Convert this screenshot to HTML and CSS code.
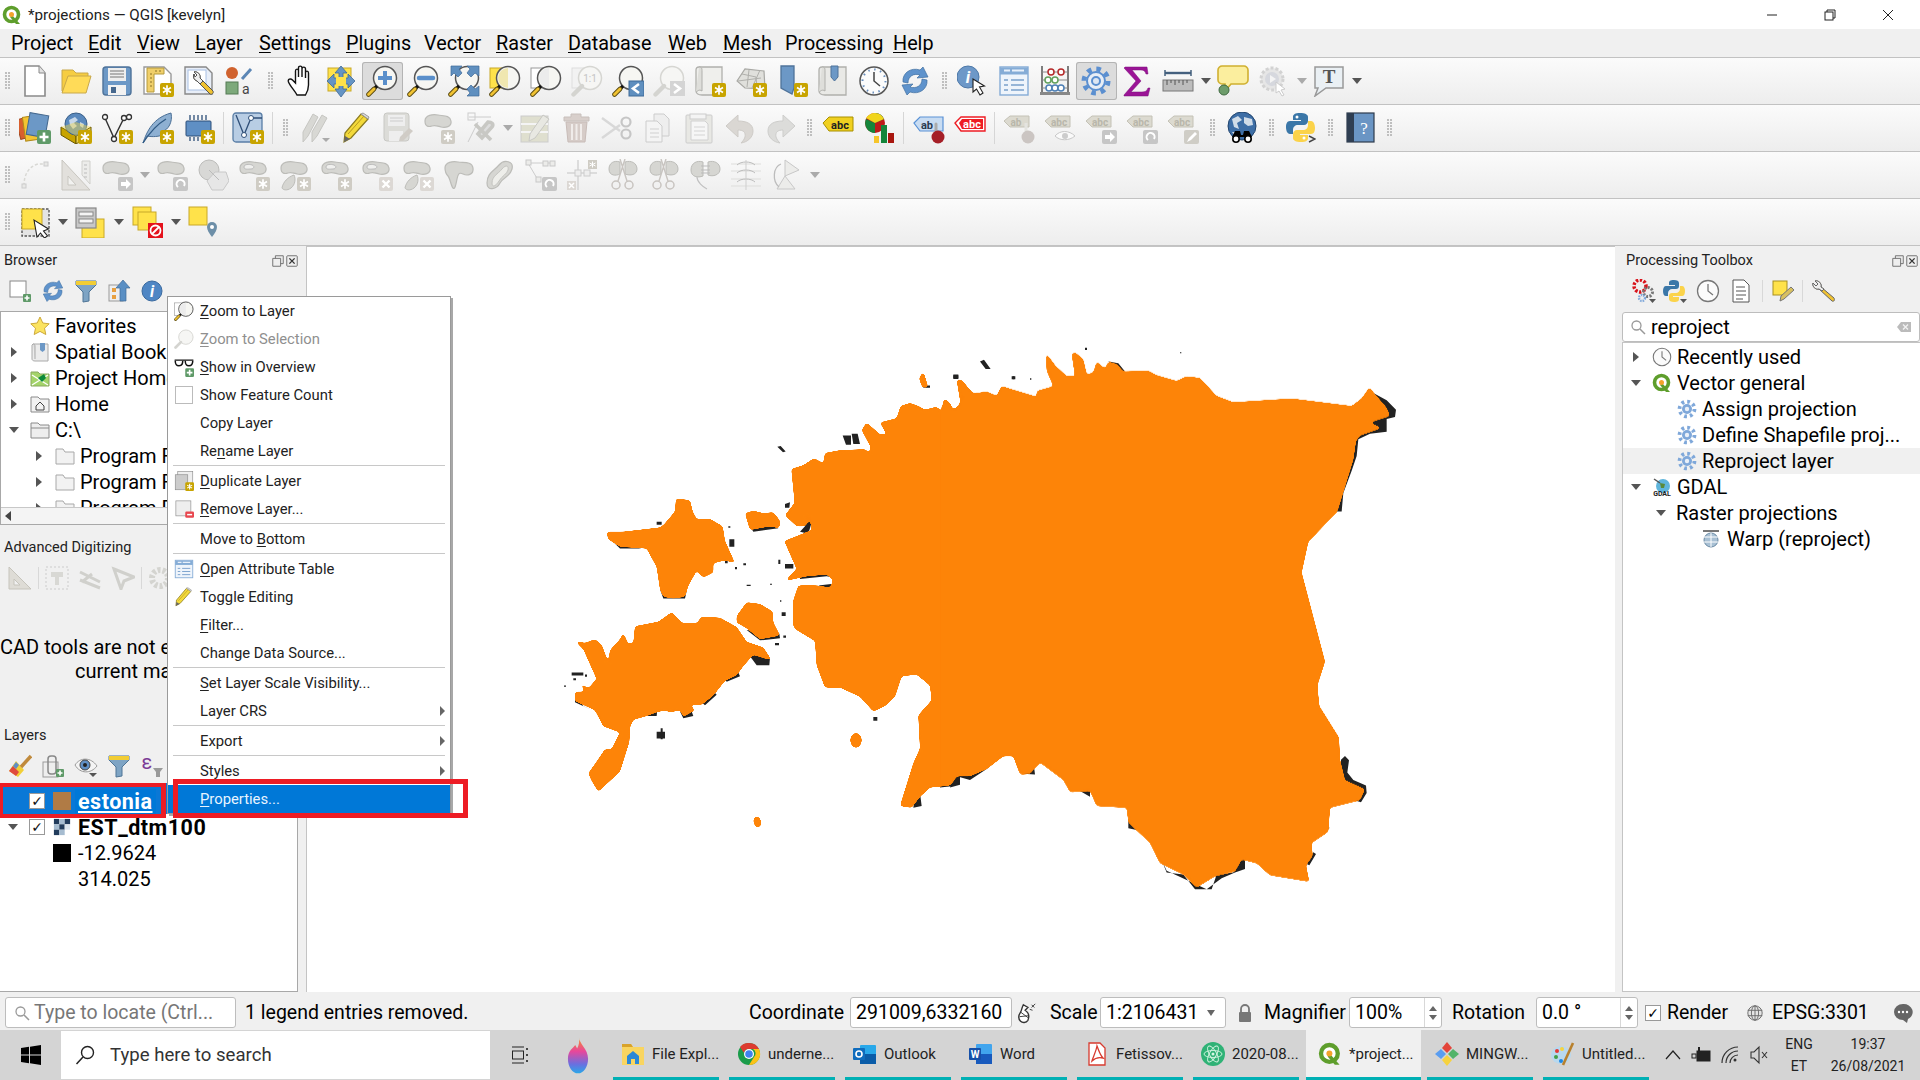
FILE: index.html
```html
<!DOCTYPE html>
<html lang="en">
<head>
<meta charset="utf-8">
<title>*projections — QGIS [kevelyn]</title>
<link rel="stylesheet" href="styles.css">
</head>
<body>
<svg class="sprite" aria-hidden="true"><defs>
<filter id="smooth" color-interpolation-filters="sRGB"><feGaussianBlur stdDeviation="4"/><feColorMatrix values="1 0 0 0 0 0 1 0 0 0 0 0 1 0 0 0 0 0 14 -6"/></filter>
<linearGradient id="flame" x1="0" y1="0" x2="0" y2="1"><stop offset="0" stop-color="#f7941d"/><stop offset=".4" stop-color="#e8479b"/><stop offset=".75" stop-color="#6a6fe0"/><stop offset="1" stop-color="#29a8e8"/></linearGradient>
<g id="bg"><rect x="18" y="18" width="14" height="14" rx="2" fill="#c8a400"/><path d="M25 20.3v9.4M21 22.6l8 4.8M29 22.6l-8 4.8" stroke="#fff" stroke-width="1.7"/></g>
<g id="bo"><rect x="18" y="18" width="14" height="14" rx="2" fill="#cfccc4"/><path d="M25 20.3v9.4M21 22.6l8 4.8M29 22.6l-8 4.8" stroke="#fff" stroke-width="1.7"/></g>
<g id="bx"><rect x="18" y="18" width="14" height="14" rx="2" fill="#dcd8d4"/><path d="M21.5 21.5l7 7M28.5 21.5l-7 7" stroke="#fff" stroke-width="2.4"/></g>
<g id="ba"><rect x="17" y="18" width="15" height="14" rx="2" fill="#c6c6c6"/><path d="M20 23h5v-3l5 5-5 5v-3h-5z" fill="#fff"/></g>
<g id="br"><rect x="17" y="18" width="15" height="14" rx="2" fill="#c6c6c6"/><path d="M22 28a4 4 0 1 1 6-1" fill="none" stroke="#fff" stroke-width="2"/></g>
<g id="bp"><rect x="18" y="18" width="14" height="14" rx="2" fill="#5f9a68"/><path d="M25 20.5v9M20.5 25h9" stroke="#fff" stroke-width="2.6"/></g>
<g id="ln"><circle cx="19" cy="13" r="11.5" fill="#f6f6f2" stroke="#555" stroke-width="1.5"/><path d="M11 21l-3 3" stroke="#111" stroke-width="3.2"/><path d="M8 24l-5.5 5.5" stroke="#5a4a10" stroke-width="4.6" stroke-linecap="round"/><path d="M8 24l-5.5 5.5" stroke="#f0c232" stroke-width="2.8" stroke-linecap="round"/></g>
<g id="lo"><circle cx="19" cy="13" r="11.5" fill="#f6f6f4" stroke="#d6d6d2" stroke-width="1.5"/><path d="M11 21l-8.500 8.500" stroke="#d4d4d0" stroke-width="4.4" stroke-linecap="round"/></g>
<path id="bl" d="M2 9c0-6 8-7 13-6s12 0 13 6-6 7-10 6-6-2-9-1-7 1-7-5z" fill="#d6d6d2" stroke="#bcbcb8" stroke-width="1.2"/>
<path id="ab" d="M1 9l6-5h19v11H7z" fill="#dcdad0" stroke="#c4c2b6"/>
<symbol id="new" viewBox="0 0 32 32"><path d="M6 1h14l6 7v23H6z" fill="#fff" stroke="#8a8a8a" stroke-width="1.6"/><path d="M20 1v7h6" fill="#e2e2e2" stroke="#8a8a8a"/></symbol>
<symbol id="open" viewBox="0 0 32 32"><path d="M2 5h11l3 3h12v4H9L4 26H2z" fill="#f6cd42" stroke="#c8a84a"/><path d="M8 11h23l-5 17H2z" fill="#ffdb58" stroke="#c8a84a"/></symbol>
<symbol id="save" viewBox="0 0 32 32"><rect x="2" y="2" width="28" height="28" rx="3" fill="#6c98c6" stroke="#4f739a" stroke-width="1.4"/><rect x="7" y="3" width="18" height="13" fill="#eee"/><path d="M9 6h14M9 9h14M9 12h14" stroke="#777" stroke-width="1.2"/><rect x="7" y="20" width="18" height="10" fill="#f2f2f2"/><rect x="10" y="22" width="5" height="6" fill="#46688e"/></symbol>
<symbol id="lay" viewBox="0 0 32 32"><path d="M2 2h20l7 7v20H2z" fill="#fff" stroke="#999" stroke-width="1.4"/><path d="M5 3h17v6H12v18H5z" fill="#f0cf6a" stroke="#b59a3c"/><path d="M8 9h2M8 13h2M8 17h2M8 21h2M14 5v2M18 5v2" stroke="#8a7228"/><use href="#bg"/></symbol>
<symbol id="man" viewBox="0 0 32 32"><path d="M2 2h21l6 6v21H2z" fill="#e8eef8" stroke="#888" stroke-width="1.4"/><rect x="5" y="5" width="18" height="20" fill="#fff" stroke="#a8c0e4"/><path d="M11 9a5 5 0 0 0 3 7l13 13c2 1 4-1 3-3L17 13a5 5 0 0 0-6-6l3 3-2 2z" fill="#f0c232" stroke="#555"/><path d="M11 9a5 5 0 0 0 3 7l3 3 3-3-3-3a5 5 0 0 0-6-6l3 3-2 2z" fill="#eee" stroke="#555"/></symbol>
<symbol id="sty" viewBox="0 0 32 32"><circle cx="8" cy="8" r="6" fill="#d0622e"/><path d="M18 14l9-10" stroke="#5b86b5" stroke-width="3"/><rect x="2" y="17" width="12" height="12" fill="#7da97b" stroke="#557a55"/><text x="18" y="29" class="ti" font-size="14" fill="#444">a</text></symbol>
<symbol id="hand" viewBox="0 0 32 32"><g transform="translate(3 0)"><path d="M10 30C8 26 3 21 1.500 17c-1-3 2-4 4-2l3 3V6c0-2.500 3-2.500 3 0v6V3c0-2.500 3.500-2.500 3.500 0v9V4c0-2.500 3.500-2.500 3.500 0v9V8c0-2.500 3-2.500 3 0v12c0 4-.5 6-3 10z" fill="#fff" stroke="#111" stroke-width="1.4"/></g></symbol>
<symbol id="pan" viewBox="0 0 32 32"><rect x="3" y="3" width="23" height="23" fill="#ffe24a" stroke="#c8a828"/><path d="M16 1l6 7h-4v5h5v-4l7 7-7 7v-4h-5v5h4l-6 8-6-8h4v-5H9v4l-7-7 7-7v4h5V8h-4z" fill="#6594c4" stroke="#3f6a98" stroke-width=".8"/><rect x="11" y="12" width="10" height="9" fill="#ffe24a"/></symbol>
<symbol id="zin" viewBox="0 0 32 32"><use href="#ln"/><path d="M19 6v14M12 13h14" stroke="#5a8fca" stroke-width="4"/></symbol>
<symbol id="zout" viewBox="0 0 32 32"><use href="#ln"/><path d="M12 13h14" stroke="#5a8fca" stroke-width="4.500" stroke-linecap="round"/></symbol>
<symbol id="zfull" viewBox="0 0 32 32"><use href="#ln"/><path d="M3 1h11l-3 3 3 4-4 4-4-4-3 3zM31 1H19l3 3-3 4 4 4 4-4 4 3zM31 31H19l3-3-3-4 4-4 4 4 4-3z" fill="#5f8fbf" stroke="#3f6a98" stroke-width=".7"/></symbol>
<symbol id="zsel" viewBox="0 0 32 32"><rect x="1" y="3" width="20" height="20" fill="#ffe24a" stroke="#c8a828"/><use href="#ln"/><path d="M19 3a10 10 0 0 0 0 20z" fill="#f0e7b0"/></symbol>
<symbol id="zlay" viewBox="0 0 32 32"><rect x="1" y="3" width="20" height="20" fill="#fff" stroke="#999"/><use href="#ln"/><path d="M19 3a10 10 0 0 0 0 20z" fill="#ececec"/></symbol>
<symbol id="z11" viewBox="0 0 32 32"><rect x="1" y="3" width="20" height="20" fill="#f2f2f2" stroke="#ddd"/><use href="#lo"/><text x="19" y="17" text-anchor="middle" class="tb" font-size="10" fill="#c4c4c4">1:1</text></symbol>
<symbol id="zlast" viewBox="0 0 32 32"><use href="#ln"/><rect x="17" y="16" width="15" height="15" fill="#5f8fbf" stroke="#3f6a98"/><path d="M27 19l-6 4.500 6 4.500" fill="none" stroke="#fff" stroke-width="2.600"/></symbol>
<symbol id="znext" viewBox="0 0 32 32"><use href="#lo"/><rect x="17" y="16" width="15" height="15" fill="#d4d4d4"/><path d="M21 19l6 4.500-6 4.500" fill="none" stroke="#fff" stroke-width="2.600"/></symbol>
<symbol id="map" viewBox="0 0 32 32"><path d="M5 2h23v22h-4v6H8c-4 0-6-2-6-4V5c0-2 1-3 3-3z" fill="#efefec" stroke="#b0b0ac" stroke-width="1.300"/><path d="M5 2c3 0 3 2 3 4v20c-3-2-4 0-6 1" fill="#dededa" stroke="#b0b0ac"/><use href="#bg"/></symbol>
<symbol id="m3d" viewBox="0 0 32 32"><path d="M2 16L10 4l19 2 1 18-20-1z" fill="#e0e0dc" stroke="#a8a8a4" stroke-width="1.200"/><path d="M7 9l14 3 1 11M14 5l-2 17M3 16l23-3M25 5l-8 18" stroke="#b0b0ac" fill="none"/><use href="#bg"/></symbol>
<symbol id="bmn" viewBox="0 0 32 32"><path d="M5 1h13v22l-2 6-11-6z" fill="#6c98c6" stroke="#4f739a" stroke-width="1.300"/><use href="#bg"/></symbol>
<symbol id="bms" viewBox="0 0 32 32"><path d="M5 2h24v28H8c-4 0-6-2-6-4V5c0-2 1-3 3-3z" fill="#e9e9e6" stroke="#b0b0ac" stroke-width="1.300"/><path d="M5 2c3 0 3 2 3 4v20c-3-2-4 0-6 1" fill="#dededa" stroke="#b0b0ac"/><path d="M14 1h7v11l-3.500 4-3.500-4z" fill="#6c98c6" stroke="#4f739a"/></symbol>
<symbol id="clk" viewBox="0 0 32 32"><circle cx="16" cy="16" r="14" fill="#fbfbfb" stroke="#555" stroke-width="1.500"/><circle cx="16" cy="16" r="11.500" fill="none" stroke="#6a8fbd" stroke-width="2" stroke-dasharray="1.500 4.500"/><path d="M16 7v9l6 5" fill="none" stroke="#444" stroke-width="1.500"/></symbol>
<symbol id="ref" viewBox="0 0 32 32"><path d="M4 17C3 8 12 2 21 5l3-3 5 10-11 1 3-3c-6-2-12 1-12 8z" fill="#5f93cc" stroke="#3f6f9f" stroke-width=".7"/><path d="M28 15c1 9-8 15-17 12l-3 3-5-10 11-1-3 3c6 2 12-1 12-8z" fill="#5f93cc" stroke="#3f6f9f" stroke-width=".7"/></symbol>
<symbol id="idn" viewBox="0 0 32 32"><circle cx="11" cy="12" r="11" fill="#6d98c8" stroke="#4d78a8"/><text x="11" y="18" text-anchor="middle" class="ts" font-size="17" font-weight="700" font-style="italic" fill="#fff">i</text><path d="M16 14l0 13 3.500-3 3.500 6 3-2-3.500-6 5-1z" fill="#fff" stroke="#222" stroke-width="1.100"/></symbol>
<symbol id="tbl" viewBox="0 0 32 32"><rect x="2" y="2" width="28" height="28" fill="#eef4fb" stroke="#85acd6" stroke-width="1.400"/><path d="M2 6h28" stroke="#85acd6" stroke-width="7"/><path d="M6 5.500h6M14 5.500h12" stroke="#e8f0fa" stroke-width="2"/><path d="M6 15h4M13 15h13M6 20h4M13 20h13M6 25h4M13 25h13" stroke="#7aa0cc" stroke-width="1.500"/></symbol>
<symbol id="aba" viewBox="0 0 32 32"><path d="M3 1v26M29 1v26" stroke="#555" stroke-width="1.500"/><path d="M3 7h26M3 15h26M3 23h26" stroke="#888"/><rect x="1" y="27" width="30" height="3" fill="#888"/><g fill="#fff" stroke-width="1.500"><circle cx="12" cy="7" r="3" stroke="#b52a2a"/><circle cx="22" cy="7" r="3" stroke="#b52a2a"/><circle cx="9" cy="15" r="3" stroke="#62a05c"/><circle cx="16" cy="15" r="3" stroke="#62a05c"/><circle cx="10" cy="23" r="3" stroke="#4d7fb5"/><circle cx="16" cy="23" r="3" stroke="#4d7fb5"/><circle cx="22" cy="23" r="3" stroke="#4d7fb5"/></g></symbol>
<symbol id="gr" viewBox="0 0 32 32"><circle cx="16" cy="16" r="12" fill="none" stroke="#5b8fd0" stroke-width="5" stroke-dasharray="4.500 4.920"/><circle cx="16" cy="16" r="9" fill="#e8eef6" stroke="#5b8fd0" stroke-width="2"/><circle cx="16" cy="16" r="4" fill="#dde6f2" stroke="#5b8fd0" stroke-width="2"/></symbol>
<symbol id="gf" viewBox="0 0 32 32"><circle cx="16" cy="16" r="12" fill="none" stroke="#7fa8da" stroke-width="6" stroke-dasharray="4.500 4.920"/><circle cx="16" cy="16" r="8" fill="#7fa8da"/><circle cx="16" cy="16" r="3.500" fill="#eaf0f8"/></symbol>
<symbol id="sig" viewBox="0 0 32 32"><path d="M4 2h22l1 7-2 0c-1-3-2-4-5-4H11l9 11-10 11h11c3 0 5-1 6-4h2l-2 8H3v-1l12-14L3 3z" fill="#9b1496" stroke="#7a107a" stroke-width=".5"/></symbol>
<symbol id="rul" viewBox="0 0 32 32"><path d="M3 5v6M29 5v6" stroke="#44607e" stroke-width="1.500"/><path d="M3 8h26" stroke="#44607e" stroke-width="2.400"/><rect x="1" y="15" width="30" height="11" fill="#bdbdbd" stroke="#777"/><path d="M5 15v5M9 15v3M13 15v5M17 15v3M21 15v5M25 15v3" stroke="#555"/></symbol>
<symbol id="tip" viewBox="0 0 32 32"><path d="M5 1h22c2 0 4 2 4 4v10c0 2-2 4-4 4H14l-6 7v-7H5c-2 0-4-2-4-4V5c0-2 2-4 4-4z" fill="#fbee9e" stroke="#d0b030" stroke-width="1.600"/><circle cx="7" cy="25" r="5" fill="#6d9c6b" stroke="#3f6a40"/></symbol>
<symbol id="act" viewBox="0 0 32 32"><circle cx="14" cy="14" r="11" fill="#e6e6e6" stroke="#d2d2d2" stroke-width="3" stroke-dasharray="3 2"/><circle cx="14" cy="14" r="7" fill="#d6d8de"/><path d="M12 10l6 4-6 4z" fill="#f4f4f4"/><path d="M18 17v11l3-2 3 5 2-1-3-5 4-1z" fill="#fff" stroke="#ccc"/></symbol>
<symbol id="txt" viewBox="0 0 32 32"><path d="M2 2h28v21H13L2 31l3-8H2z" fill="#eaf0f4" stroke="#999" stroke-width="1.500"/><text x="16" y="18" text-anchor="middle" class="tt" font-size="19" font-weight="700" fill="#555">T</text></symbol>
<symbol id="dm" viewBox="0 0 32 32"><rect x="-1" y="6" width="14" height="20" transform="rotate(-15 6 16)" fill="#d85f2e" stroke="#a0481f"/><rect x="5" y="4" width="18" height="24" transform="rotate(-8 14 16)" fill="#f3c431" stroke="#b08a1c"/><rect x="9" y="2" width="19" height="22" transform="rotate(10 18 13)" fill="#6c98c6" stroke="#44688e"/><use href="#bp"/></symbol>
<symbol id="gpk" viewBox="0 0 32 32"><path d="M1 15l15 9v8L1 23z" fill="#c8a400" stroke="#6a5800"/><path d="M31 15l-15 9v8l15-9z" fill="#e8cf50" stroke="#6a5800"/><circle cx="16" cy="12" r="11" fill="#5a89bd" stroke="#3a5f88"/><path d="M9 8l6-3 3 3-4 3 3 3-4 3-3-4zM20 10l4 2-1 4-3-2z" fill="#c7d8ea"/><path d="M1 15l15-5 15 5-15 9z" fill="#f5d94c" opacity=".45"/><use href="#bg"/></symbol>
<symbol id="shp" viewBox="0 0 32 32"><path d="M4 6l9 20 10-20h5" fill="none" stroke="#333" stroke-width="1.400"/><g fill="#fff" stroke="#333" stroke-width="1.300"><circle cx="4" cy="5" r="2.500"/><circle cx="13" cy="27" r="2.500"/><circle cx="23" cy="6" r="2.500"/><circle cx="28" cy="5" r="2.500"/></g><use href="#bg"/></symbol>
<symbol id="fea" viewBox="0 0 32 32"><path d="M1 31C5 19 11 6 29 1c2 9-3 17-8 18l2 3c-6 3-13 3-18 2z" fill="#8eb0d2" stroke="#4a6f96"/><path d="M1 31C8 20 14 13 24 7" fill="none" stroke="#2f5a85" stroke-width="1.300"/><use href="#bg"/></symbol>
<symbol id="mem" viewBox="0 0 32 32"><rect x="3" y="9" width="25" height="15" rx="1" fill="#5f8fc4" stroke="#2d4f78"/><path d="M7 3v5M11 3v5M15 3v5M19 3v5M23 3v5M7 25v4M11 25v4M15 25v4" stroke="#2d4f78" stroke-width="1.300"/><use href="#bg"/></symbol>
<symbol id="vir" viewBox="0 0 32 32"><rect x="1" y="1" width="29" height="29" rx="3" fill="#b8cde4" stroke="#5a7ea6" stroke-width="1.300"/><path d="M4 3l8 20 7-17h11" fill="none" stroke="#2f4f78" stroke-width="1.300"/><g fill="#fff" stroke="#2f4f78"><circle cx="12" cy="23" r="2.500"/><circle cx="19" cy="6" r="2.500"/></g><use href="#bg"/></symbol>
<symbol id="pens" viewBox="0 0 32 32"><path d="M3 30l0-10L13 2l5 3L8 24zM12 30l0-10L22 3l5 3-10 18z" fill="#d8d8d4" stroke="#c6c6c2"/><path d="M22 26h8l-4 4z" fill="#aaa"/></symbol>
<symbol id="pen" viewBox="0 0 32 32"><path d="M3 30l1-9L20 2l7 5L10 26z" fill="#f3d93a" stroke="#8a7a20" stroke-width="1.200"/><path d="M7 22L23 4" stroke="#b89a20"/><path d="M3 30l1-6 5 3z" fill="#666"/><path d="M20 2l7 5 1-2-6-4z" fill="#ddd" stroke="#999"/></symbol>
<symbol id="sed" viewBox="0 0 32 32"><rect x="2" y="1" width="25" height="28" rx="3" fill="#dcdcd8" stroke="#c8c8c4"/><rect x="6" y="3" width="17" height="11" fill="#eee"/><path d="M8 6h13M8 9h13" stroke="#ccc"/><rect x="7" y="19" width="14" height="10" fill="#eee"/><path d="M17 29l1-4 9-9 4 3-10 10z" fill="#d0ccc6"/></symbol>
<symbol id="padd" viewBox="0 0 32 32"><use href="#bl"/><use href="#bo"/></symbol>
<symbol id="vtx" viewBox="0 0 32 32"><rect x="4" y="1" width="7" height="7" fill="none" stroke="#ccc"/><path d="M5 5h22M4 30L14 10" stroke="#ccc"/><path d="M11 12l16 16M24 10c4 0 6 2 4 5L18 26l-4-4z" stroke="#c8c8c4" stroke-width="3.600" fill="#ddd"/></symbol>
<symbol id="mod" viewBox="0 0 32 32"><rect x="2" y="4" width="27" height="26" fill="#dfdfcf" stroke="#ccc"/><path d="M2 12h27M2 20h27" stroke="#f4f4f4" stroke-width="2"/><path d="M10 29l1-7L24 3l6 4-14 19z" fill="#e8e8e2" stroke="#c8c8c4"/></symbol>
<symbol id="del" viewBox="0 0 32 32"><path d="M4 5h7V2h10v3h8v4H4z" fill="#d8cfcb" stroke="#c8c0bc"/><path d="M6 10h21l-2 20H8z" fill="#d6ccc8" stroke="#c8bcb8"/><path d="M12 12v16M16.500 12v16M21 12v16" stroke="#f0ecea" stroke-width="2"/></symbol>
<symbol id="cut" viewBox="0 0 32 32"><path d="M1 6l18 13M1 26l18-13" stroke="#d8d8d8" stroke-width="2.400"/><g fill="none" stroke="#c6c6c6" stroke-width="2.200"><circle cx="25" cy="10" r="4.500"/><circle cx="25" cy="22" r="4.500"/></g></symbol>
<symbol id="cpy" viewBox="0 0 32 32"><path d="M12 2h10l5 5v17H12z" fill="#eee" stroke="#ccc"/><path d="M4 9h11l5 5v16H4z" fill="#f4f4f4" stroke="#ccc"/><path d="M8 17h9M8 21h9M8 25h9" stroke="#d0d0d0"/></symbol>
<symbol id="pst" viewBox="0 0 32 32"><rect x="3" y="3" width="26" height="28" rx="1" fill="#e8e8e4" stroke="#ccc"/><rect x="7" y="2" width="16" height="5" fill="#f4f4f4" stroke="#ccc"/><path d="M8 9h14l3 3v16H8z" fill="#f6f6f6" stroke="#d0d0d0"/><path d="M11 15h11M11 19h11M11 23h11" stroke="#d4d4d4"/></symbol>
<symbol id="und" viewBox="0 0 32 32"><path d="M14 3L2 14l12 11v-7c5 0 8 2 7 7-1 3-3 5-4 6 7-1 12-6 12-12 0-7-6-10-15-10z" fill="#dad7d3" stroke="#cecbc7"/></symbol>
<symbol id="red" viewBox="0 0 32 32"><path d="M18 3l12 11-12 11v-7c-5 0-8 2-7 7 1 3 3 5 4 6C8 30 3 25 3 19c0-7 6-10 15-10z" fill="#dcdcda" stroke="#cdcdcb"/></symbol>
<symbol id="abcy" viewBox="0 0 32 32"><g transform="translate(0 3)"><path d="M1 8l6-6h24v14H7z" fill="#f0d020" stroke="#a89000"/><text x="18" y="13.500" text-anchor="middle" class="tb" font-size="11" font-weight="700" fill="#222">abc</text></g></symbol>
<symbol id="dia" viewBox="0 0 32 32"><circle cx="12" cy="11" r="10" fill="#bd1a1a"/><path d="M12 11V1a10 10 0 0 1 9 6zM12 11L3 7A10 10 0 0 0 12 21z" fill="#14853b"/><path d="M12 11V1C8 1 5 3 3 6z M12 11l9-4C19 3 16 1 12 1z" fill="#f1d51c"/><rect x="11" y="24" width="5" height="7" fill="#f6c52a"/><rect x="18" y="13" width="6" height="18" fill="#14853b"/><rect x="25" y="21" width="6" height="10" fill="#a8160e"/></symbol>
<symbol id="pin" viewBox="0 0 32 32"><g transform="translate(0 3)"><path d="M1 8l6-6h23v14H7z" fill="#c8dcf2" stroke="#5a92d6" stroke-width="1.200"/><text x="14" y="13.500" text-anchor="middle" class="tb" font-size="11" font-weight="700" fill="#2a3a50">ab</text></g><path d="M23 12v12" stroke="#aaa" stroke-width="3" stroke-linecap="round"/><circle cx="25" cy="25" r="6.500" fill="#a51f27"/></symbol>
<symbol id="abcr" viewBox="0 0 32 32"><g transform="translate(0 3)"><path d="M1 8l6-6h24v14H7z" fill="#fff" stroke="#ee1c24" stroke-width="1.400"/><path d="M5 8l3-4h21v10H8z" fill="#ee1c24"/><text x="18" y="13" text-anchor="middle" class="tb" font-size="11" font-weight="700" fill="#fff">abc</text></g></symbol>
<symbol id="a1" viewBox="0 0 32 32"><use href="#ab"/><text x="13" y="14" text-anchor="middle" class="tb" font-size="10" font-weight="700" fill="#b8b6aa">ab</text><path d="M23 11v12" stroke="#e4e4e0" stroke-width="3"/><circle cx="25" cy="25" r="6.500" fill="#cbc5c2"/></symbol>
<symbol id="a2" viewBox="0 0 32 32"><use href="#ab"/><text x="15" y="14" text-anchor="middle" class="tb" font-size="10" font-weight="700" fill="#b8b6aa">abc</text><path d="M11 24c5-6 14-6 20 0-6 5-15 5-20 0z" fill="#fafafa" stroke="#c8c8c8"/><circle cx="21" cy="24" r="3" fill="#ccc"/></symbol>
<symbol id="a3" viewBox="0 0 32 32"><use href="#ab"/><text x="15" y="14" text-anchor="middle" class="tb" font-size="10" font-weight="700" fill="#b8b6aa">abc</text><use href="#ba"/></symbol>
<symbol id="a4" viewBox="0 0 32 32"><use href="#ab"/><text x="15" y="14" text-anchor="middle" class="tb" font-size="10" font-weight="700" fill="#b8b6aa">abc</text><use href="#br"/></symbol>
<symbol id="a5" viewBox="0 0 32 32"><use href="#ab"/><text x="15" y="14" text-anchor="middle" class="tb" font-size="10" font-weight="700" fill="#b8b6aa">abc</text><rect x="17" y="18" width="15" height="14" rx="2" fill="#cfcdc6"/><path d="M20 30l2-4 6-6 2 2-6 6z" fill="#fff"/></symbol>
<symbol id="glb" viewBox="0 0 32 32"><circle cx="16" cy="14" r="14" fill="#3d6ea6" stroke="#22456e"/><path d="M6 7l6-3 4 4-5 3 2 6-5-2zM18 5l8 2 1 6-5 1-4-3zM6 20l6 0 0 5-3-1z" fill="#d0dce8"/><g fill="#000"><circle cx="10" cy="27" r="4"/><circle cx="22" cy="27" r="4"/><path d="M9 19h5l1 4h2l1-4h5l3 6H6z"/></g><circle cx="10" cy="27" r="2.400" fill="#fff"/><circle cx="22" cy="27" r="2.400" fill="#fff"/></symbol>
<symbol id="py" viewBox="0 0 32 32"><g transform="translate(2 0)"><path d="M14 1c-5 0-7 1.500-7 4v3h8v1H4c-3 0-4 3-4 6s1 7 4 7h3v-4c0-3 2-5 5-5h6c2 0 4-2 4-4V5c0-2.500-3-4-8-4z" fill="#3b77a8"/><circle cx="11" cy="5" r="1.500" fill="#fff"/><path d="M15 30c5 0 7-1.500 7-4v-3h-8v-1h11c3 0 4-3 4-6s-1-7-4-7h-3v4c0 3-2 5-5 5H11c-2 0-4 2-4 4v4c0 2.500 3 4 8 4z" fill="#fbd34a"/><circle cx="18" cy="26" r="1.500" fill="#fff"/><path d="M23 24l6 3-6 3" fill="none" stroke="#444" stroke-width="1.400"/></g></symbol>
<symbol id="hlp" viewBox="0 0 32 32"><rect x="2" y="1" width="27" height="29" fill="#6a95c4" stroke="#2e3b4c" stroke-width="1.200"/><rect x="2" y="1" width="7" height="29" fill="#2f3e52"/><text x="19" y="22" text-anchor="middle" class="tt" font-size="17" fill="#fff">?</text></symbol>
<symbol id="dig" viewBox="0 0 32 32"><path d="M5 27C5 16 9 8 19 5h6" fill="none" stroke="#d8d8d4" stroke-width="1.500" stroke-dasharray="3 2"/><g fill="#e8e8e6" stroke="#ccc"><rect x="3" y="25" width="4" height="4"/><rect x="25" y="3" width="4" height="4"/></g></symbol>
<symbol id="tri" viewBox="0 0 32 32"><path d="M2 1l28 30H2z" fill="#e2e0dc" stroke="#c8c6c0"/><path d="M8 17l8 9H8z" fill="#f2f2f0" stroke="#c8c6c0"/><path d="M22 2h8v23l-8-9z" fill="#ececea" stroke="#d0d0cc"/><path d="M24 6h3M24 10h3M24 14h3M24 18h3" stroke="#bbb"/></symbol>
<symbol id="bma" viewBox="0 0 32 32"><use href="#bl"/><use href="#ba"/></symbol>
<symbol id="bmr" viewBox="0 0 32 32"><use href="#bl"/><use href="#br"/></symbol>
<symbol id="off" viewBox="0 0 32 32"><circle cx="12" cy="11" r="10" fill="#d8d8d6" stroke="#bcbcba"/><path d="M18 13l11 0 3 9-6 9H15l-5-9z" fill="#e6e6e6" stroke="#c8c8c8"/><path d="M12 11l10 10" stroke="#bbb"/></symbol>
<symbol id="hg" viewBox="0 0 32 32"><use href="#bl"/><path d="M6 8c0-3 5-3 8-2s2 4-1 4-7 1-7-2z" fill="#f0f0ee" stroke="#bbb"/><use href="#bo"/></symbol>
<symbol id="pg" viewBox="0 0 32 32"><use href="#bl"/><path d="M3 29c1-6 6-11 12-13 2 4 1 10-3 13s-8 2-9 0z" fill="#d6d6d2" stroke="#bcbcb8"/><use href="#bo"/></symbol>
<symbol id="hx" viewBox="0 0 32 32"><use href="#bl"/><path d="M6 8c0-3 5-3 8-2s2 4-1 4-7 1-7-2z" fill="#f0f0ee" stroke="#bbb"/><use href="#bx"/></symbol>
<symbol id="px" viewBox="0 0 32 32"><use href="#bl"/><path d="M3 29c1-6 6-11 12-13 2 4 1 10-3 13s-8 2-9 0z" fill="#d6d6d2" stroke="#bcbcb8"/><use href="#bx"/></symbol>
<symbol id="fl" viewBox="0 0 32 32"><path d="M2 9c0-6 8-7 13-6s14-1 15 6-6 8-10 6-5 0-6 5-2 11-4 9-3-10-5-12-3-4-3-8z" fill="#d6d6d2" stroke="#bcbcb8" stroke-width="1.200"/></symbol>
<symbol id="rg" viewBox="0 0 32 32"><path d="M3 24c0-10 7-12 12-18s15-4 13 4-9 8-12 14-13 9-13 0z" fill="#d6d6d2" stroke="#bcbcb8" stroke-width="1.200"/><path d="M8 24c0-7 6-9 10-14s7-3 6 1-6 6-9 11-7 7-7 2z" fill="#eeeeea" stroke="#c4c4c0"/></symbol>
<symbol id="vr" viewBox="0 0 32 32"><path d="M3 4l10 17M3 4h22" stroke="#ccc" fill="none"/><g fill="#ececea" stroke="#c8c8c8"><rect x="1" y="1" width="5" height="5"/><rect x="11" y="18" width="5" height="5"/><rect x="18" y="2" width="5" height="5"/><rect x="25" y="2" width="5" height="5"/></g><use href="#br"/></symbol>
<symbol id="sp" viewBox="0 0 32 32"><path d="M12 1v30M1 14h30" stroke="#d4d4d4" stroke-width="1.500"/><rect x="9" y="11" width="6" height="6" fill="#eee" stroke="#ccc"/><rect x="18" y="11" width="6" height="6" fill="#eee" stroke="#ccc"/><rect x="22" y="1" width="9" height="9" fill="#cfccc4"/><path d="M26.500 2.500v6M23.500 4l6 3M29.500 4l-6 3" stroke="#fff"/><rect x="1" y="22" width="9" height="9" fill="#dcd8d4"/><path d="M3 24l5 5M8 24l-5 5" stroke="#fff" stroke-width="1.500"/></symbol>
<symbol id="sc" viewBox="0 0 32 32"><path d="M2 10C2 4 7 1 13 3v12c-4 2-11 2-11-5zM18 3c6-2 12 1 12 7s-7 7-12 5z" fill="#d6d6d2" stroke="#bcbcb8"/><path d="M18 0L11 22M13 0l7 22" stroke="#c8c4c0" stroke-width="1.400"/><g fill="none" stroke="#c8c4c0" stroke-width="1.500"><circle cx="9" cy="26" r="4"/><circle cx="22" cy="26" r="4"/></g></symbol>
<symbol id="mg" viewBox="0 0 32 32"><path d="M2 11C2 4 8 1 14 3v14c-5 2-12 1-12-6zM19 3c6-2 12 1 12 7s-7 8-12 6z" fill="#d6d6d2" stroke="#bcbcb8"/><path d="M12 7h9M12 11h9M12 14h9" stroke="#bbb"/><path d="M8 18c0 5 6 10 10 12" stroke="#c0c0c0" fill="none" stroke-width="1.200"/></symbol>
<symbol id="oc" viewBox="0 0 32 32"><path d="M1 5h30M1 12h30M1 20h30M1 27h30" stroke="#dededc" stroke-width="1.200"/><path d="M7 6c4-4 14-4 18 0M7 14c4-4 14-4 18 0M7 23c4-4 14-4 18 0" fill="none" stroke="#bcbcbc"/><path d="M16 1v30" stroke="#cfcfcf"/></symbol>
<symbol id="fg" viewBox="0 0 32 32"><path d="M14 1l14 10-14 6zM14 17l10 13H6z" fill="#ececea" stroke="#c8c8c8"/><path d="M10 5C2 8 1 22 8 28" fill="none" stroke="#bcbcbc" stroke-width="1.300"/></symbol>
<symbol id="sl" viewBox="0 0 32 32"><rect x="3" y="3" width="27" height="27" fill="#e4e4e4" stroke="#555" stroke-width="1.400" stroke-dasharray="2.500 1.500"/><rect x="3" y="3" width="20" height="20" fill="#ffe24a" stroke="#c8a828"/><path d="M15 14l3 17 3.500-4 4 5 3-2-4-5 5-2z" fill="#fff" stroke="#222" stroke-width="1.100"/></symbol>
<symbol id="sa" viewBox="0 0 32 32"><rect x="7" y="13" width="22" height="19" fill="#ffe24a" stroke="#c8a828"/><rect x="1" y="2" width="20" height="20" fill="#c8c8c8" stroke="#888" stroke-width="1.200"/><rect x="4" y="6" width="14" height="4" fill="#f4f4f4" stroke="#888"/><rect x="4" y="13" width="14" height="4" fill="#f4f4f4" stroke="#888"/></symbol>
<symbol id="sd" viewBox="0 0 32 32"><rect x="1" y="1" width="18" height="18" fill="#ffe24a" stroke="#c8a828"/><rect x="6" y="6" width="18" height="18" fill="#ffe24a" stroke="#c8a828"/><rect x="16" y="17" width="15" height="15" fill="#e4121c"/><circle cx="23.500" cy="24.500" r="5" fill="none" stroke="#fff" stroke-width="1.800"/><path d="M20 28l7-7" stroke="#fff" stroke-width="1.800"/></symbol>
<symbol id="sp2" viewBox="0 0 32 32"><rect x="1" y="1" width="18" height="18" fill="#ffe24a" stroke="#c8a828"/><path d="M24 31c-3-4-5-7-5-10a5 5 0 0 1 10 0c0 3-2 6-5 10z" fill="#6d8fa8"/><circle cx="24" cy="21" r="2" fill="#fff"/></symbol>
<symbol id="star" viewBox="0 0 20 20"><path d="M10 1l2.800 6 6.400.8-4.700 4.400 1.300 6.300L10 15.400l-5.800 3.100 1.300-6.300L.8 7.800 7.200 7z" fill="#fbe360" stroke="#cda93c"/></symbol>
<symbol id="bk" viewBox="0 0 20 20"><path d="M3 2h15v17H5c-2 0-3-1-3-2V3z" fill="#ececec" stroke="#aaa"/><path d="M3 2c2 0 2 1 2 3v12" fill="#ddd" stroke="#aaa"/><path d="M10 1h5v7l-2.500 2L10 8z" fill="#6c98c6"/></symbol>
<symbol id="fpr" viewBox="0 0 20 20"><path d="M1 4h7l2 2h9v12H1z" fill="#a4d46a" stroke="#8aa860"/><path d="M2 7l16 10M2 17L18 7" stroke="#fff" stroke-width="1.300"/><path d="M8 10l6-4 2 4-4 4z" fill="#0c8a3a"/></symbol>
<symbol id="fh" viewBox="0 0 20 20"><path d="M1 3h7l2 2h9v13H1z" fill="#f2f2f2" stroke="#8a8a8a"/><path d="M6 12l4-4 4 4v4H6z" fill="none" stroke="#444"/></symbol>
<symbol id="fc" viewBox="0 0 20 20"><path d="M1 3h7l2 2h9v13H1z" fill="#eee" stroke="#8a8a8a"/><path d="M1 8h18" stroke="#8a8a8a"/></symbol>
<symbol id="ff" viewBox="0 0 20 20"><path d="M1 3h7l2 3h9v12H1z" fill="#f2f2f2" stroke="#a8a8a8"/></symbol>
<symbol id="bad" viewBox="0 0 24 24"><rect x="2" y="2" width="16" height="16" fill="#fff" stroke="#888"/><rect x="15" y="15" width="8" height="8" rx="1" fill="#5f9a68"/><path d="M19 16.500v5M16.500 19h5" stroke="#fff" stroke-width="1.600"/></symbol>
<symbol id="fun" viewBox="0 0 24 24"><path d="M2 2h20v4l-7 7v9l-6 1V13L2 6z" fill="#7ea4c4" stroke="#4f7596"/><rect x="2" y="2" width="20" height="4" fill="#f2cd34"/></symbol>
<symbol id="up" viewBox="0 0 24 24"><rect x="2" y="6" width="14" height="16" fill="#eee" stroke="#999"/><rect x="5" y="9" width="4" height="4" fill="#e8a040"/><rect x="5" y="16" width="4" height="4" fill="#e8a040"/><path d="M16 1l7 8h-4v13h-6V9H9z" fill="#5a8fc4" stroke="#3f6a98" stroke-width=".7"/></symbol>
<symbol id="inf" viewBox="0 0 24 24"><circle cx="12" cy="12" r="10" fill="#4f86c4" stroke="#3a6a9f"/><text x="12" y="18" text-anchor="middle" class="ts" font-size="16" font-weight="700" font-style="italic" fill="#fff">i</text></symbol>
<symbol id="tri2" viewBox="0 0 24 24"><path d="M1 1l22 22H1z" fill="#dedcd6" stroke="#c6c4bc"/><path d="M6 13l6 6H6z" fill="#f0f0f0" stroke="#c6c4bc"/></symbol>
<symbol id="cadt" viewBox="0 0 24 24"><rect x="1" y="1" width="22" height="22" fill="none" stroke="#ccc" stroke-dasharray="2 2"/><path d="M6 6h12v5h-4v8h-4v-8H6z" fill="#d8d8d4"/></symbol>
<symbol id="cadp" viewBox="0 0 24 24"><path d="M2 6l20 10M2 14l20 8M4 16L14 8" stroke="#d0d0cc" stroke-width="3" fill="none"/></symbol>
<symbol id="cadc" viewBox="0 0 24 24"><path d="M3 3l20 8-10 4-3 8z" fill="none" stroke="#d0d0cc" stroke-width="3"/></symbol>
<symbol id="cadg" viewBox="0 0 24 24"><circle cx="12" cy="12" r="8" fill="none" stroke="#d4d4d0" stroke-width="6" stroke-dasharray="3 2"/></symbol>
<symbol id="brs" viewBox="0 0 24 24"><path d="M1 17l7-10 8 9-6 7z" fill="#f2cf36"/><path d="M1 17l4-5 6 6-3 4z" fill="#df4a3e"/><path d="M5 12l3-4 3 3-3 4z" fill="#5f8fc4"/><path d="M13 13L23 2" stroke="#c08a3c" stroke-width="3.500"/></symbol>
<symbol id="adg" viewBox="0 0 24 24"><rect x="2" y="8" width="15" height="15" fill="#eee" stroke="#999"/><rect x="7" y="2" width="8" height="18" rx="3" fill="none" stroke="#888" stroke-width="1.500"/><rect x="15" y="15" width="8" height="8" rx="1" fill="#5f9a68"/><path d="M19 16.500v5M16.500 19h5" stroke="#fff" stroke-width="1.600"/></symbol>
<symbol id="eye" viewBox="0 0 24 24"><path d="M1 11c5-8 16-8 22 1-6 8-17 8-22-1z" fill="#f4f4f4" stroke="#999"/><circle cx="11" cy="11" r="5" fill="#5f8fc4" stroke="#444"/><circle cx="11" cy="11" r="2" fill="#222"/><path d="M15 19h8l-4 4z" fill="#555"/></symbol>
<symbol id="eps" viewBox="0 0 24 24"><text x="7" y="15" text-anchor="middle" class="ts" font-size="20" fill="#7b3a96">ε</text><path d="M13 14h10l-3 4v5h-4v-5z" fill="#999"/></symbol>
<symbol id="fl1" viewBox="0 0 16 16"><path d="M5 2h9v9H5z" fill="#eee" stroke="#666"/><path d="M2 5h9v9H2z" fill="#eee" stroke="#666"/></symbol>
<symbol id="fl2" viewBox="0 0 16 16"><rect x="2" y="2" width="12" height="12" rx="1" fill="#eee" stroke="#666"/><path d="M5 5l6 6M11 5l-6 6" stroke="#333" stroke-width="1.600"/></symbol>
<symbol id="alg" viewBox="0 0 24 24"><circle cx="8" cy="7" r="6" fill="none" stroke="#d8141c" stroke-width="3.500" stroke-dasharray="2.400 1.500"/><circle cx="16" cy="13" r="4.500" fill="none" stroke="#777" stroke-width="3" stroke-dasharray="2 1.400"/><circle cx="10" cy="19" r="3" fill="none" stroke="#7fa8da" stroke-width="2.400" stroke-dasharray="1.500 1"/><path d="M17 20h7l-3.500 4z" fill="#555"/></symbol>
<symbol id="pyd" viewBox="0 0 24 24"><path d="M11 1c-4 0-5 1-5 3v2h6v1H3C1 7 0 9 0 12s1 5 3 5h2v-3c0-2 2-4 4-4h4c2 0 3-1 3-3V4c0-2-2-3-5-3z" fill="#3b77a8"/><path d="M11 23c4 0 5-1 5-3v-2h-6v-1h9c2 0 3-2 3-5s-1-5-3-5h-2v3c0 2-2 4-4 4H9c-2 0-3 1-3 3v3c0 2 2 3 5 3z" fill="#fbd34a"/><path d="M17 20h7l-3.500 4z" fill="#555"/></symbol>
<symbol id="clks" viewBox="0 0 24 24"><circle cx="12" cy="12" r="10.500" fill="#fbfbfb" stroke="#777" stroke-width="1.300"/><path d="M12 5v7l5 4" fill="none" stroke="#777" stroke-width="1.300"/></symbol>
<symbol id="dct" viewBox="0 0 24 24"><path d="M4 1h11l5 5v17H4z" fill="#fff" stroke="#555"/><path d="M7 8h9M7 12h10M7 16h10M7 20h7" stroke="#555"/></symbol>
<symbol id="slp" viewBox="0 0 24 24"><rect x="2" y="2" width="14" height="14" fill="#ffe24a" stroke="#a89020"/><path d="M9 22l1-5 10-9 3 3-10 9z" fill="#d8c060" stroke="#777"/></symbol>
<symbol id="wr" viewBox="0 0 24 24"><path d="M2 4a5 5 0 0 0 6 6l13 12c2 1 3-1 2-3L10 8a5 5 0 0 0-6-6l3 3-2 2z" fill="#f0c232" stroke="#666"/><path d="M2 4a5 5 0 0 0 6 6l3 2 2-2-3-2a5 5 0 0 0-6-6l3 3-2 2z" fill="#eee" stroke="#666"/></symbol>
<symbol id="qg" viewBox="0 0 20 20"><circle cx="9.500" cy="9.500" r="7" fill="#fff" stroke="#5e9e2c" stroke-width="3.600"/><path d="M10 10l8 9h-4l-6-7z" fill="#5e9e2c"/><circle cx="9.500" cy="9.500" r="2.500" fill="#f3a32b"/></symbol>
<symbol id="gd" viewBox="0 0 20 20"><circle cx="11" cy="9" r="7" fill="#5fb5dc"/><path d="M8 6l5 1-1 4-3 0z" fill="#5a8a3a"/><path d="M2 2l6 4" stroke="#555" stroke-width="1.500"/><text x="10" y="19" text-anchor="middle" class="tb" font-size="7" font-weight="700" fill="#222">GDAL</text></symbol>
<symbol id="wp" viewBox="0 0 20 20"><path d="M2 2h16" stroke="#777" stroke-width="2"/><circle cx="10" cy="11" r="7" fill="#a8c0d4" stroke="#6a8aa4"/><path d="M3 8h14M3 13h14M10 4v14" stroke="#fff"/></symbol>
<symbol id="mag" viewBox="0 0 16 16"><circle cx="6.500" cy="6.500" r="4.500" fill="none" stroke="#999" stroke-width="1.300"/><path d="M10 10l5 5" stroke="#999" stroke-width="1.500"/></symbol>
<symbol id="clr" viewBox="0 0 16 16"><path d="M1 8l4-5h10v10H5z" fill="#bbb"/><path d="M7 5.500l5 5M12 5.500l-5 5" stroke="#f2f2f2" stroke-width="1.400"/></symbol>
<symbol id="ms" viewBox="0 0 24 24"><path d="M8 3l5 3-3 3c3 2 5 6 3 11-2 3-6 3-8 1-3-3-2-7 0-10 1-1 1-4 3-8z" fill="#fff" stroke="#333" stroke-width="1.500"/><path d="M5 11l8 6M4 16l9-1" stroke="#333"/><path d="M17 3l3 3M21 2l-4 4M15 8l3 1" stroke="#333"/></symbol>
<symbol id="lck" viewBox="0 0 16 20"><path d="M4 9V6a4 4 0 0 1 8 0v3" fill="none" stroke="#777" stroke-width="1.800"/><rect x="2" y="9" width="12" height="10" rx="1" fill="#777"/></symbol>
<symbol id="wgs" viewBox="0 0 20 20"><circle cx="10" cy="10" r="8" fill="#e4e4e4" stroke="#666"/><path d="M2 7h16M2 13h16M10 2v16" stroke="#666"/><ellipse cx="10" cy="10" rx="4" ry="8" fill="none" stroke="#666"/></symbol>
<symbol id="cmt" viewBox="0 0 20 20"><path d="M10 1a9 8 0 0 1 5 15l-1 4-4-3a9 8 0 0 1 0-16z" fill="#666"/><circle cx="6" cy="9" r="1.200" fill="#fff"/><circle cx="10" cy="9" r="1.200" fill="#fff"/><circle cx="14" cy="9" r="1.200" fill="#fff"/></symbol>
<symbol id="win" viewBox="0 0 20 20"><path d="M0 3l8-1.200V9.500H0zM9 1.700L20 0v9.500H9zM0 10.500h8v7.700L0 17zM9 10.500h11V20L9 18.300z" fill="#000"/></symbol>
<symbol id="srch" viewBox="0 0 20 20"><circle cx="12.500" cy="7.500" r="6" fill="none" stroke="#222" stroke-width="1.400"/><path d="M8 12L1.500 19" stroke="#222" stroke-width="1.500"/></symbol>
<symbol id="tv" viewBox="0 0 20 20"><path d="M2 2h12M2 18h12" stroke="#222"/><rect x="2.500" y="6" width="11" height="8" fill="none" stroke="#222"/><path d="M17 3v2M17 9v2M17 15v2" stroke="#222" stroke-width="1.600"/></symbol>
<symbol id="flm" viewBox="0 0 24 40"><path d="M13 0c0 8 10 13 10 24 0 9-5 16-11 16S1 33 1 24C1 15 7 12 9 9c1 2 2 3 2 4 2-4 3-8 2-13z" fill="url(#flame)"/></symbol>
<symbol id="fex" viewBox="0 0 24 24"><path d="M1 2h9l2 3h11v18H1z" fill="#f9d560"/><path d="M1 2h9l2 3H1z" fill="#d9a32b"/><path d="M6 14l6-5 6 5v8H6z" fill="#2a88d8"/><rect x="10" y="17" width="4" height="5" fill="#f9d560"/></symbol>
<symbol id="chr" viewBox="0 0 24 24"><circle cx="12" cy="12" r="11" fill="#1a9c4a"/><path d="M12 1a11 11 0 0 1 10 6H12a5 5 0 0 0-5 4L3 5a11 11 0 0 1 9-4z" fill="#dd3b2f"/><path d="M22 7a11 11 0 0 1-10 16l5-8a5 5 0 0 0-1-8z" fill="#fbc217"/><circle cx="12" cy="12" r="5" fill="#fff"/><circle cx="12" cy="12" r="3.800" fill="#3f82ee"/></symbol>
<symbol id="out" viewBox="0 0 24 24"><rect x="7" y="3" width="16" height="18" rx="1" fill="#28a8ea"/><rect x="7" y="12" width="16" height="10" fill="#0a5ca8"/><rect x="0" y="6" width="12" height="12" rx="1" fill="#0f6cbd"/><circle cx="6" cy="12" r="3" fill="none" stroke="#fff" stroke-width="1.600"/></symbol>
<symbol id="wrd" viewBox="0 0 24 24"><rect x="7" y="2" width="16" height="20" rx="1" fill="#41a5ee"/><rect x="7" y="12" width="16" height="10" fill="#185abd"/><rect x="0" y="6" width="12" height="12" rx="1" fill="#1650a8"/><text x="6" y="16" text-anchor="middle" class="tb" font-size="10" font-weight="700" fill="#fff">W</text></symbol>
<symbol id="pdf" viewBox="0 0 24 24"><path d="M4 1h11l5 5v17H4z" fill="#fff" stroke="#d73a2e" stroke-width="1.300"/><path d="M12 4c2 5 3 9 6 12-4-1-8 0-11 3 1-4 4-9 5-15z" fill="none" stroke="#d73a2e" stroke-width="1.300"/></symbol>
<symbol id="atm" viewBox="0 0 24 24"><circle cx="12" cy="12" r="12" fill="#2fb276"/><g fill="none" stroke="#d8f6e4" stroke-width=".9"><ellipse cx="12" cy="12" rx="9" ry="3.500"/><ellipse cx="12" cy="12" rx="9" ry="3.500" transform="rotate(60 12 12)"/><ellipse cx="12" cy="12" rx="9" ry="3.500" transform="rotate(120 12 12)"/></g><circle cx="12" cy="12" r="1.500" fill="#d8f6e4"/></symbol>
<symbol id="git" viewBox="0 0 24 24"><path d="M12 0l5 6-5 5-5-5z" fill="#e3453b"/><path d="M6 7l5 5-5 5-6-5z" fill="#5a9df0"/><path d="M18 7l6 5-6 5-5-5z" fill="#52b46a"/><path d="M12 13l5 5-5 6-5-6z" fill="#f6d23e"/></symbol>
<symbol id="pnt" viewBox="0 0 24 24"><ellipse cx="10" cy="13" rx="10" ry="9" fill="#b8d8ee"/><circle cx="6" cy="9" r="2" fill="#e53935"/><circle cx="11" cy="7" r="2" fill="#f6d23e"/><circle cx="5" cy="15" r="2" fill="#43a047"/><circle cx="10" cy="19" r="2" fill="#1e88e5"/><path d="M22 1L12 23" stroke="#b8802c" stroke-width="2.600"/></symbol>
<symbol id="up2" viewBox="0 0 20 20"><path d="M3 14l7-8 7 8" fill="none" stroke="#222" stroke-width="1.200"/></symbol>
<symbol id="plg" viewBox="0 0 20 20"><rect x="6" y="6" width="13" height="10" fill="#222" stroke="#222"/><rect x="1" y="9" width="4" height="4" fill="none" stroke="#222"/><path d="M8 2v4" stroke="#222" stroke-width="2"/></symbol>
<symbol id="wfi" viewBox="0 0 20 20"><path d="M2 18a16 16 0 0 1 16-16M6 18a12 12 0 0 1 12-12M10 18a8 8 0 0 1 8-8" fill="none" stroke="#333" stroke-width="1.200"/><circle cx="15" cy="15" r="1.500" fill="#333"/></symbol>
<symbol id="mut" viewBox="0 0 20 20"><path d="M2 7h3l5-5v16l-5-5H2z" fill="none" stroke="#333" stroke-width="1.100"/><path d="M13 7l5 6M18 7l-5 6" stroke="#333" stroke-width="1.100"/></symbol>
<symbol id="min" viewBox="0 0 12 12"><path d="M1 6h10" stroke="#222"/></symbol>
<symbol id="max" viewBox="0 0 12 12"><path d="M3 3V1h8v8H9" fill="none" stroke="#222"/><rect x="1" y="3" width="8" height="8" fill="none" stroke="#222"/></symbol>
<symbol id="cls" viewBox="0 0 12 12"><path d="M1 1l10 10M11 1L1 11" stroke="#222"/></symbol>
<symbol id="zdis" viewBox="0 0 32 32"><use href="#lo"/></symbol>
<symbol id="ovw" viewBox="0 0 32 32"><path d="M1 5h30" stroke="#111" stroke-width="2"/><path d="M2 6c0 5 1 8 6 8s6-3 6-8M18 6c0 5 1 8 6 8s6-3 6-8" fill="none" stroke="#111" stroke-width="2.400"/><use href="#bp"/></symbol>
<symbol id="dup" viewBox="0 0 32 32"><rect x="6" y="1" width="24" height="24" fill="#eee" stroke="#888"/><rect x="2" y="6" width="20" height="24" fill="#ccc" stroke="#888"/><use href="#bg"/></symbol>
<symbol id="rem" viewBox="0 0 32 32"><rect x="3" y="3" width="24" height="24" fill="#eee" stroke="#888"/><rect x="18" y="20" width="14" height="10" rx="2" fill="#e8474f"/><path d="M21 25h8" stroke="#fff" stroke-width="2.400"/></symbol>
<symbol id="chk" viewBox="0 0 20 20"><rect x="1" y="1" width="6" height="6" fill="#223c5c"/><rect x="7" y="1" width="6" height="6" fill="#a6bcd0"/><rect x="13" y="1" width="6" height="6" fill="#223c5c"/><rect x="1" y="7" width="6" height="6" fill="#a6bcd0"/><rect x="7" y="7" width="6" height="6" fill="#223c5c"/><rect x="13" y="7" width="6" height="6" fill="#dde6ee"/><rect x="1" y="13" width="6" height="6" fill="#223c5c"/><rect x="7" y="13" width="6" height="6" fill="#a6bcd0"/></symbol>
</defs></svg>

<header class="titlebar">
  <svg class="title-logo"><use href="#qg"/></svg>
  <span class="title-text">*projections — QGIS [kevelyn]</span>
  <span class="winbtns">
    <span class="winbtn"><svg class="i12"><use href="#min"/></svg></span>
    <span class="winbtn"><svg class="i12"><use href="#max"/></svg></span>
    <span class="winbtn"><svg class="i12"><use href="#cls"/></svg></span>
  </span>
</header>

<nav class="menubar">
  <span class="mb mb1">Project</span><span class="mb mb2"><u>E</u>dit</span><span class="mb mb3"><u>V</u>iew</span><span class="mb mb4"><u>L</u>ayer</span><span class="mb mb5"><u>S</u>ettings</span><span class="mb mb6"><u>P</u>lugins</span><span class="mb mb7">Vect<u>o</u>r</span><span class="mb mb8"><u>R</u>aster</span><span class="mb mb9"><u>D</u>atabase</span><span class="mb mb10"><u>W</u>eb</span><span class="mb mb11"><u>M</u>esh</span><span class="mb mb12">Pro<u>c</u>essing</span><span class="mb mb13"><u>H</u>elp</span>
</nav>

<section class="toolrow">
  <i class="g w15"></i>
  <b class="t"><svg class="i"><use href="#new"/></svg></b><b class="t"><svg class="i"><use href="#open"/></svg></b><b class="t"><svg class="i"><use href="#save"/></svg></b><b class="t"><svg class="i"><use href="#lay"/></svg></b><b class="t"><svg class="i"><use href="#man"/></svg></b><b class="t"><svg class="i"><use href="#sty"/></svg></b>
  <i class="g w19"></i>
  <b class="t"><svg class="i"><use href="#hand"/></svg></b><b class="t"><svg class="i"><use href="#pan"/></svg></b><b class="t on"><svg class="i"><use href="#zin"/></svg></b><b class="t"><svg class="i"><use href="#zout"/></svg></b><b class="t"><svg class="i"><use href="#zfull"/></svg></b><b class="t"><svg class="i"><use href="#zsel"/></svg></b><b class="t"><svg class="i"><use href="#zlay"/></svg></b><b class="t"><svg class="i"><use href="#z11"/></svg></b><b class="t"><svg class="i"><use href="#zlast"/></svg></b><b class="t"><svg class="i"><use href="#znext"/></svg></b><b class="t"><svg class="i"><use href="#map"/></svg></b><b class="t"><svg class="i"><use href="#m3d"/></svg></b><b class="t"><svg class="i"><use href="#bmn"/></svg></b><b class="t"><svg class="i"><use href="#bms"/></svg></b><b class="t"><svg class="i"><use href="#clk"/></svg></b><b class="t"><svg class="i"><use href="#ref"/></svg></b>
  <i class="g w17"></i>
  <b class="t"><svg class="i"><use href="#idn"/></svg></b><b class="t"><svg class="i"><use href="#tbl"/></svg></b><b class="t"><svg class="i"><use href="#aba"/></svg></b><b class="t on"><svg class="i"><use href="#gr"/></svg></b><b class="t"><svg class="i"><use href="#sig"/></svg></b><b class="t d"><svg class="i"><use href="#rul"/></svg><em></em></b><b class="t"><svg class="i"><use href="#tip"/></svg></b><b class="t d dim"><svg class="i"><use href="#act"/></svg><em></em></b><b class="t d"><svg class="i"><use href="#txt"/></svg><em></em></b>
</section>

<section class="toolrow">
  <i class="g w15"></i>
  <b class="t"><svg class="i"><use href="#dm"/></svg></b><b class="t"><svg class="i"><use href="#gpk"/></svg></b><b class="t"><svg class="i"><use href="#shp"/></svg></b><b class="t"><svg class="i"><use href="#fea"/></svg></b><b class="t"><svg class="i"><use href="#mem"/></svg></b>
  <i class="s w8"></i>
  <b class="t"><svg class="i"><use href="#vir"/></svg></b>
  <i class="s w7"></i><i class="g w20"></i>
  <b class="t"><svg class="i"><use href="#pens"/></svg></b><b class="t"><svg class="i"><use href="#pen"/></svg></b><b class="t"><svg class="i"><use href="#sed"/></svg></b><b class="t"><svg class="i"><use href="#padd"/></svg></b><b class="t d dim"><svg class="i"><use href="#vtx"/></svg><em></em></b><b class="t"><svg class="i"><use href="#mod"/></svg></b><b class="t"><svg class="i"><use href="#del"/></svg></b><b class="t"><svg class="i"><use href="#cut"/></svg></b><b class="t"><svg class="i"><use href="#cpy"/></svg></b><b class="t"><svg class="i"><use href="#pst"/></svg></b><b class="t"><svg class="i"><use href="#und"/></svg></b><b class="t"><svg class="i"><use href="#red"/></svg></b>
  <i class="g w16"></i>
  <b class="t"><svg class="i"><use href="#abcy"/></svg></b><b class="t"><svg class="i"><use href="#dia"/></svg></b>
  <i class="s w9"></i>
  <b class="t"><svg class="i"><use href="#pin"/></svg></b><b class="t"><svg class="i"><use href="#abcr"/></svg></b>
  <i class="s w8"></i>
  <b class="t"><svg class="i"><use href="#a1"/></svg></b><b class="t"><svg class="i"><use href="#a2"/></svg></b><b class="t"><svg class="i"><use href="#a3"/></svg></b><b class="t"><svg class="i"><use href="#a4"/></svg></b><b class="t"><svg class="i"><use href="#a5"/></svg></b>
  <i class="g w18"></i>
  <b class="t"><svg class="i"><use href="#glb"/></svg></b>
  <i class="g w17"></i>
  <b class="t"><svg class="i"><use href="#py"/></svg></b>
  <i class="g w20"></i>
  <b class="t"><svg class="i"><use href="#hlp"/></svg></b>
  <i class="g w16"></i>
</section>

<section class="toolrow">
  <i class="g w15"></i>
  <b class="t"><svg class="i"><use href="#dig"/></svg></b><b class="t"><svg class="i"><use href="#tri"/></svg></b><b class="t d dim"><svg class="i"><use href="#bma"/></svg><em></em></b><b class="t"><svg class="i"><use href="#bmr"/></svg></b><b class="t"><svg class="i"><use href="#off"/></svg></b><b class="t"><svg class="i"><use href="#hg"/></svg></b><b class="t"><svg class="i"><use href="#pg"/></svg></b><b class="t"><svg class="i"><use href="#hg"/></svg></b><b class="t"><svg class="i"><use href="#hx"/></svg></b><b class="t"><svg class="i"><use href="#px"/></svg></b><b class="t"><svg class="i"><use href="#fl"/></svg></b><b class="t"><svg class="i"><use href="#rg"/></svg></b><b class="t"><svg class="i"><use href="#vr"/></svg></b><b class="t"><svg class="i"><use href="#sp"/></svg></b><b class="t"><svg class="i"><use href="#sc"/></svg></b><b class="t"><svg class="i"><use href="#sc"/></svg></b><b class="t"><svg class="i"><use href="#mg"/></svg></b><b class="t"><svg class="i"><use href="#oc"/></svg></b><b class="t d dim"><svg class="i"><use href="#fg"/></svg><em></em></b>
</section>

<section class="toolrow">
  <i class="g w15"></i>
  <b class="t d d4"><svg class="i"><use href="#sl"/></svg><em></em></b><b class="t d d4"><svg class="i"><use href="#sa"/></svg><em></em></b><b class="t d d4"><svg class="i"><use href="#sd"/></svg><em></em></b><b class="t"><svg class="i"><use href="#sp2"/></svg></b>
</section>

<main class="workspace">
  <aside class="leftdock">
    <div class="dtitle"><span>Browser</span><span class="flt"><svg class="i14"><use href="#fl1"/></svg><svg class="i14"><use href="#fl2"/></svg></span></div>
    <div class="dbar top"><svg class="i24 p1"><use href="#bad"/></svg><svg class="i24 p2"><use href="#ref"/></svg><svg class="i24 p2"><use href="#fun"/></svg><svg class="i24 p2"><use href="#up"/></svg><svg class="i24 p2"><use href="#inf"/></svg></div>
    <div class="tree browser">
      <div class="r"><span class="ex"></span><svg class="ic"><use href="#star"/></svg><span class="tx">Favorites</span></div>
      <div class="r"><span class="ex rt"></span><svg class="ic"><use href="#bk"/></svg><span class="tx">Spatial Bookmarks</span></div>
      <div class="r"><span class="ex rt"></span><svg class="ic"><use href="#fpr"/></svg><span class="tx">Project Home</span></div>
      <div class="r"><span class="ex rt"></span><svg class="ic"><use href="#fh"/></svg><span class="tx">Home</span></div>
      <div class="r"><span class="ex dn"></span><svg class="ic"><use href="#fc"/></svg><span class="tx">C:\</span></div>
      <div class="r in1"><span class="ex rt"></span><svg class="ic"><use href="#ff"/></svg><span class="tx">Program Files</span></div>
      <div class="r in1"><span class="ex rt"></span><svg class="ic"><use href="#ff"/></svg><span class="tx">Program Files (x86)</span></div>
      <div class="r in1"><span class="ex rt"></span><svg class="ic"><use href="#ff"/></svg><span class="tx">Program Data</span></div>
      <div class="hscroll"><span class="harrow"></span></div>
    </div>
    <div class="dtitle adv"><span>Advanced Digitizing</span></div>
    <div class="dbar adb"><svg class="i24 p1"><use href="#tri2"/></svg><i class="s2"></i><svg class="i24 p3"><use href="#cadt"/></svg><svg class="i24 p2"><use href="#cadp"/></svg><svg class="i24 p2"><use href="#cadc"/></svg><i class="s2"></i><svg class="i24 p3"><use href="#cadg"/></svg></div>
    <div class="cadmsg"><span class="cad1">CAD tools are not enabled for the</span><span class="cad2">current map tool</span></div>
    <div class="dtitle lyr"><span>Layers</span></div>
    <div class="dbar lyb"><svg class="i24 p1"><use href="#brs"/></svg><svg class="i24 p2"><use href="#adg"/></svg><svg class="i24 p2"><use href="#eye"/></svg><svg class="i24 p2"><use href="#fun"/></svg><svg class="i24 p2"><use href="#eps"/></svg></div>
    <div class="tree layers">
      <div class="r sel"><span class="ex"></span><span class="cb">✓</span><span class="sw brown"></span><b class="sel-t">estonia</b></div>
      <div class="r"><span class="ex dn"></span><span class="cb">✓</span><svg class="chk"><use href="#chk"/></svg><b>EST_dtm100</b></div>
      <div class="r"><span class="ex"></span><span class="cbx"></span><span class="sw blk"></span><span>-12.9624</span></div>
      <div class="r"><span class="ex"></span><span class="cbx"></span><span class="sw"></span><span>314.025</span></div>
    </div>
  </aside>

  <div class="canvas">
    <svg class="mapsvg" viewBox="307 247 1308 745">
      <g transform="translate(540 330) scale(.33333 .37037)" fill="#222">
        <path d="M200 555l40 35h65l-65-10zM360 700l10 25h65l5-20-40 10zM105 980v25l55 23-30-13zM300 1042h50l2-17-32 5zM420 1030l10 18 30-6-5-12zM485 1005l10 8 35-28-10-10zM550 935l10 15 40-15-5-10zM625 875l25 30h38l2-20zM620 810l40 28 60-6-2-12zM630 530l10 15 75-10-15-10zM780 665l20-5 80-5 25 17-45-7-80 7zM835 690l45 12v-17zM790 485l25 35-10 30-25-5 15-15 10-30zM735 470l15-5-2 15-13 0zM1120 1290l25-5-5-35-15 10zM1240 1200l-10 35 30-7v-28z"/>
        <path d="M712 315l10-2 15 15-8 2zM908 285h25v25h-15zM935 280h18l7 28h-20zM1240 120h15v10h-15zM1320 85l12-5 20 25h-15zM1418 125h8v8h-8zM350 518h15v8h-15zM568 565h15v20h-15zM610 630h8v5h-8zM715 620h6v12h-6zM735 632h25v12h-25zM725 762h12v10h-12zM730 825h8v6h-8zM705 845h12v6h-12zM95 925h35v8h-35zM100 940h8v6h-8zM135 930h6v6h-6zM72 960h6v3h-6zM350 1085h25v18h-25zM362 1075h6v30h-6zM1000 1045h12v10h-12zM620 688h12v3h-12zM690 685h6v3h-6zM720 730h4v4h-4zM565 530h6v4h-6zM555 622h8v8h-8zM585 640h6v6h-6zM1470 130h4v4h-4zM1150 150h20v6h-20z"/>
      </g>
      <g transform="translate(940 330) scale(.33333 .37037)" fill="#222">
        <path d="M1300 170l40 20 28 25-3 20-25 5v35l-50 5-35 15-5 45-15 40-25 60-5 50h-20l20-90 20-100 60-60 15-40z"/>
        <path d="M1215 1150l12 12-5 33 18 20 38 15 2 20-17 25-20-5-40-60v-50zM1160 1310l8 35-8 5zM1095 1440l25-30 8 5-20 30z"/>
        <path d="M660 1420l20 45 50 5 35 40h50l15-40 50-5 20-35 15-5v30l-30 10-40 15-45 30-60-25-60-25zM565 1320v25l25 5 10-10zM420 1245l30-5v20zM260 1140l20 25 5 35-35-2 20-18zM190 1148l-50 37-50 30-40-10-15 27-35 3v-12l30-3 15-20 40-5 50-15 50-35zM40 122h15v10h-15zM215 125h8v8h-8zM435 48h6v6h-6zM720 60h4v3h-4zM505 85l30 5 20 22-25-5z"/>
      </g>
      <g class="land" transform="translate(540 330) scale(.33333 .37037)" fill="#fd8408">
        <path d="M754 375l36-10 32-19 28 14 5-28 45-7 75-3 13 10 4-16-27-46 15-20 40 32h20l-20-32 50-12 12-33 28-8 25 8 20 10 35-8 15 13 7-35 16 10 12 20 22-15-12-65h15l35 37 40-5 30 11 15-26 55 16v1032l-20-50h-30l-50 35-50 20h-40l-20 25-60 5-30 25-25 30-35-5 40-115 20-40-5-90 40-40-5-40-40-30-45 5-20 55-30 25-35 15-40-40-60-25h-45l-25-60-5-65-55-30-10-10v-70l15-40h55l40 5 10-20-20-15-60 5-65 13 35-33-37-75 42-15 40-15-5-30-30-20-15-15z"/>
        <path d="M770 460l-35 40 35 30h25l13-15-18-25z"/>
        <path d="M200 545h50l110-12 12-8 33-35 3-35 42 5 8 30 12 20h40l38 20 7 40 30 60-30-8-35 8v25l-30 13-20-18-25 40-10 30-35 5-30-5-10-20-10-60-30-50-80-5-35-20zM105 840l30 5 30-10 20 15 20 48 5-33 30-30 10-17 15 30 15-3 5-45 70-12 40-26 33 30h42l15-18 55 3 50 25 30 40 50 15 25 35-20-5-35-10-30 30-20 25-35 15-35 40-35 25h-35l15 15-35 17-10-17-30 5-15-5-25 5-30 10-40 10-10 20-2 40-28 80-65 55-20-30-10-20 20-25 30-40h20l25-45-50-17-25-43-60-25v-25h30l-15-23 25 13 25-25-40-80zM590 772l30-37 40 5 38 20 2 30 20 35-60 10-40-30-30-15zM615 495l25-7 30 7 30-3 20 23-2 20-28-5-60 10z"/>
        <ellipse cx="948" cy="1108" rx="17" ry="20"/><ellipse cx="652" cy="1328" rx="11" ry="15" transform="rotate(-20 652 1328)"/>
        <path d="M1150 112l15 43h-18l-10-25z"/>
      </g>
      <g class="land" transform="translate(940 330) scale(.33333 .37037)" fill="#fd8408">
        <path d="M0 220l15-35 20 28 15 2 15-30-15-50h10l40 37 40-5 30 11 15-26 105 28v-15l50-13-20-42-2-48 27 33 35 30h25l-10-60 10-5 25 20 10 40 20-5 10-30 25 20 10-20 25 7 20 20 75-2 25 12 60 16 30-13 40 5 50 48 50 17 175-10 180 20 30-20 23-30 52 55 10 22-60 18 35 15-65 20-12 15-8 50-48 140-87 82-20 83 70 240-23 65 6 55 59 85 3 60 15 55 60 25-15 30-90 20-5 65-50 30 3 35-20 25 10 45-118-18-40-32-45-10-20 32-60 13-55 30-40-35-70-30-30-55-65-55-5-40-90-5-20-40-60 3-20-33-70-47-30 30-30 2-20-50h-30l-50 35-50 15-40 5-15 20-35 7z"/>
      </g>
    </svg>
  </div>

  <aside class="rightdock">
    <div class="dtitle rt-t"><span>Processing Toolbox</span><span class="flt"><svg class="i14"><use href="#fl1"/></svg><svg class="i14"><use href="#fl2"/></svg></span></div>
    <div class="dbar top"><svg class="i24 q1"><use href="#alg"/></svg><svg class="i24 q2"><use href="#pyd"/></svg><svg class="i24 q3"><use href="#clks"/></svg><svg class="i24 q3"><use href="#dct"/></svg><i class="s2 q3"></i><svg class="i24 q4"><use href="#slp"/></svg><i class="s2 q5"></i><svg class="i24 q4"><use href="#wr"/></svg></div>
    <div class="psearch"><svg class="i16"><use href="#mag"/></svg><span class="psq">reproject</span><svg class="i16 clrx"><use href="#clr"/></svg></div>
    <div class="tree ptree">
      <div class="r"><span class="ex rt"></span><svg class="ic"><use href="#clks"/></svg><span>Recently used</span></div>
      <div class="r"><span class="ex dn"></span><svg class="ic"><use href="#qg"/></svg><span>Vector general</span></div>
      <div class="r ch"><svg class="ic"><use href="#gf"/></svg><span>Assign projection</span></div>
      <div class="r ch"><svg class="ic"><use href="#gf"/></svg><span>Define Shapefile proj...</span></div>
      <div class="r ch hov"><svg class="ic"><use href="#gf"/></svg><span>Reproject layer</span></div>
      <div class="r"><span class="ex dn"></span><svg class="ic"><use href="#gd"/></svg><span>GDAL</span></div>
      <div class="r in1 noic"><span class="ex dn"></span><span>Raster projections</span></div>
      <div class="r ch2"><svg class="ic"><use href="#wp"/></svg><span>Warp (reproject)</span></div>
    </div>
  </aside>
</main>

<footer class="statusbar">
  <div class="sb-field locator"><svg class="i16"><use href="#mag"/></svg><span>Type to locate (Ctrl...</span></div>
  <span class="sb-msg">1 legend entries removed.</span>
  <span class="sb-spacer"></span>
  <span class="sb-l l-coord">Coordinate</span>
  <div class="sb-field f-coord">291009,6332160</div>
  <span class="sb-icon s-ms"><svg class="i22"><use href="#ms"/></svg></span>
  <span class="sb-l l-scale">Scale</span>
  <div class="sb-field f-scale"><span>1:2106431</span><em></em></div>
  <span class="sb-icon s-lck"><svg class="i-lck"><use href="#lck"/></svg></span>
  <span class="sb-l l-mag">Magnifier</span>
  <div class="sb-field f-mag"><span>100%</span><i class="spin"><em class="up"></em><em></em></i></div>
  <span class="sb-l l-rot">Rotation</span>
  <div class="sb-field f-rot"><span>0.0 °</span><i class="spin"><em class="up"></em><em></em></i></div>
  <span class="sb-check">✓</span>
  <span class="sb-l l-ren">Render</span>
  <span class="sb-icon s-wgs"><svg class="i18"><use href="#wgs"/></svg></span>
  <span class="sb-l l-eps">EPSG:3301</span>
  <span class="sb-icon s-cmt"><svg class="i20"><use href="#cmt"/></svg></span>
</footer>

<footer class="taskbar">
  <span class="tk-start"><svg class="i20"><use href="#win"/></svg></span>
  <div class="tk-search"><svg class="i20"><use href="#srch"/></svg><span>Type here to search</span></div>
  <span class="tk-slot tv"><svg class="i20"><use href="#tv"/></svg></span>
  <span class="tk-slot fl"><svg class="i-flm"><use href="#flm"/></svg></span>
  <div class="app"><svg class="i24x"><use href="#fex"/></svg><span>File Expl...</span></div>
  <div class="app"><svg class="i24x"><use href="#chr"/></svg><span>underne...</span></div>
  <div class="app"><svg class="i24x"><use href="#out"/></svg><span>Outlook</span></div>
  <div class="app"><svg class="i24x"><use href="#wrd"/></svg><span>Word</span></div>
  <div class="app"><svg class="i24x"><use href="#pdf"/></svg><span>Fetissov...</span></div>
  <div class="app"><svg class="i24x"><use href="#atm"/></svg><span>2020-08...</span></div>
  <div class="app act"><svg class="i24x"><use href="#qg"/></svg><span>*project...</span></div>
  <div class="app"><svg class="i24x"><use href="#git"/></svg><span>MINGW...</span></div>
  <div class="app"><svg class="i24x"><use href="#pnt"/></svg><span>Untitled...</span></div>
  <span class="tray t1"><svg class="i20"><use href="#up2"/></svg></span>
  <span class="tray t2"><svg class="i20"><use href="#plg"/></svg></span>
  <span class="tray t3"><svg class="i20"><use href="#wfi"/></svg></span>
  <span class="tray t4"><svg class="i20"><use href="#mut"/></svg></span>
  <div class="tk-lang"><span>ENG</span><span>ET</span></div>
  <div class="tk-clock"><span>19:37</span><span>26/08/2021</span></div>
</footer>

<div class="ctxmenu">
  <div class="mi"><svg class="mic"><use href="#zlay"/></svg><span><u>Z</u>oom to Layer</span></div>
  <div class="mi dis"><svg class="mic"><use href="#zdis"/></svg><span><u>Z</u>oom to Selection</span></div>
  <div class="mi"><svg class="mic"><use href="#ovw"/></svg><span><u>S</u>how in Overview</span></div>
  <div class="mi"><span class="mbox"></span><span>Show Feature Count</span></div>
  <div class="mi"><span class="mic"></span><span>Copy Layer</span></div>
  <div class="mi"><span class="mic"></span><span>Re<u>n</u>ame Layer</span></div>
  <div class="msep"></div>
  <div class="mi"><svg class="mic"><use href="#dup"/></svg><span><u>D</u>uplicate Layer</span></div>
  <div class="mi"><svg class="mic"><use href="#rem"/></svg><span><u>R</u>emove Layer...</span></div>
  <div class="msep"></div>
  <div class="mi"><span class="mic"></span><span>Move to <u>B</u>ottom</span></div>
  <div class="msep"></div>
  <div class="mi"><svg class="mic"><use href="#tbl"/></svg><span><u>O</u>pen Attribute Table</span></div>
  <div class="mi"><svg class="mic"><use href="#pen"/></svg><span>Toggle Editing</span></div>
  <div class="mi"><span class="mic"></span><span><u>F</u>ilter...</span></div>
  <div class="mi"><span class="mic"></span><span>Change Data Source...</span></div>
  <div class="msep"></div>
  <div class="mi"><span class="mic"></span><span><u>S</u>et Layer Scale Visibility...</span></div>
  <div class="mi sub"><span class="mic"></span><span>Layer CRS</span></div>
  <div class="msep"></div>
  <div class="mi sub"><span class="mic"></span><span>Export</span></div>
  <div class="msep"></div>
  <div class="mi sub"><span class="mic"></span><span>Styles</span></div>
  <div class="mi active"><span class="mic"></span><span><u>P</u>roperties...</span></div>
</div>
<div class="redbox red1"></div>
<div class="redbox red2"></div>
</body>
</html>
```

FILE: styles.css
```css
* { box-sizing: border-box; }
html, body { margin: 0; padding: 0; }
body {
  width: 1920px; height: 1080px; overflow: hidden; position: relative;
  display: flex; flex-direction: column;
  background: #f0f0f0; color: #000;
  font-family: Roboto, "Liberation Sans", sans-serif;
}
svg { display: block; flex: none; overflow: visible; }
u { text-underline-offset: 2px; text-decoration-thickness: 1px; }
.sprite { position: absolute; width: 0; height: 0; }
.ti, .tb, .ts { font-family: Roboto, sans-serif; }
.tt { font-family: "Liberation Serif", serif; }
.land { filter: url(#smooth); }

.titlebar { height: 29px; background: #fff; display: flex; align-items: center; flex: none; }
.title-logo { width: 20px; height: 20px; margin-left: 2px; }
.title-text { margin-left: 6px; font-size: 15.200px; color: #222; }
.winbtns { margin-left: auto; display: flex; margin-right: 3px; }
.winbtn { width: 58px; display: flex; justify-content: center; }
.i12 { width: 12px; height: 12px; }

.menubar { height: 28px; display: flex; align-items: center; flex: none; background: #f0f0f0; font-size: 19.800px; }
.mb { display: block; flex: none; }
.mb1 { margin-left: 11px; width: 77px; }
.mb2 { width: 49px; } .mb3 { width: 58px; } .mb4 { width: 64px; } .mb5 { width: 87px; }
.mb6 { width: 78px; } .mb7 { width: 72px; } .mb8 { width: 72px; } .mb9 { width: 100px; }
.mb10 { width: 55px; } .mb11 { width: 62px; } .mb12 { width: 108px; }

.toolrow {
  height: 47px; flex: none; display: flex; align-items: center;
  border-top: 1px solid #c2c2c2;
  background: linear-gradient(#fbfbfb, #ededed);
}
.t { width: 41px; height: 38px; flex: none; display: flex; align-items: center; padding-left: 3.500px; font-weight: 400; border-radius: 3px; border: 0; }
.t.on { background: #dcdcdc; box-shadow: inset 0 0 0 1px #b4b4b4; }
.t.d { width: 55px; }
.t.d4 { width: 56.500px; }
.t em { margin-left: 7px; width: 0; height: 0; border-left: 5px solid transparent; border-right: 5px solid transparent; border-top: 6px solid #555; }
.t.dim em { border-top-color: #aaa; }
.i { width: 32px; height: 32px; }
.g { height: 18px; flex: none; background-image: radial-gradient(circle at 1px 1px, #bdbdbd .7px, transparent 1px); background-size: 3px 3px; background-clip: content-box; background-origin: content-box; }
.s { height: 32px; flex: none; background: linear-gradient(#d6d6d6, #d6d6d6) 3px 0 / 1px 100% no-repeat; }
.w7 { width: 7px; } .w8 { width: 8px; } .w9 { width: 9px; }
.w15 { width: 15px; padding: 0 5px; } .w16 { width: 16px; padding: 0 5px; } .w17 { width: 17px; padding: 0 6px; }
.w18 { width: 18px; padding: 0 6px; } .w19 { width: 19px; padding: 0 7px; } .w20 { width: 20px; padding: 0 7px; }

.workspace { height: 747px; flex: none; display: flex; background: #f0f0f0; border-top: 1px solid #c2c2c2; }
.leftdock { width: 306px; flex: none; display: flex; flex-direction: column; }
.rightdock { width: 298px; flex: none; margin-left: 7px; display: flex; flex-direction: column; }
.canvas { width: 1309px; flex: none; background: #fff; border-left: 1px solid #c4c4c4; border-top: 1px solid #c4c4c4; }
.mapsvg { width: 1308px; height: 745px; }

.dtitle { height: 29px; flex: none; display: flex; align-items: center; justify-content: space-between; padding: 0 7px 0 4px; font-size: 14.500px; color: #222; }
.flt { display: flex; }
.i14 { width: 14px; height: 14px; }
.dbar { height: 36px; flex: none; display: flex; align-items: center; }
.dbar.top { padding-bottom: 5px; }
.i24 { width: 24px; height: 24px; }
.p1 { margin-left: 8px; } .p2 { margin-left: 9px; } .p3 { margin-left: 6px; }
.s2 { width: 1px; height: 22px; background: #d8d8d8; margin-left: 6px; }

.tree { background: #fff; font-size: 20px; position: relative; overflow: hidden; }
.browser { height: 214px; flex: none; width: 306px; border: 1px solid #a8a8a8; border-width: 1px 0 1px 1px; padding-top: 1px; white-space: nowrap; }
.browser .r { width: 166px; }
.tx { min-width: 0; overflow: hidden; white-space: nowrap; }
.r { height: 26px; display: flex; align-items: center; padding-left: 8px; white-space: nowrap; }
.ex { width: 10px; flex: none; height: 0; }
.ex.rt { width: 6px; margin: 0 2px; height: 0; border-left: 6px solid #555; border-top: 5px solid transparent; border-bottom: 5px solid transparent; }
.ex.dn { border-top: 6px solid #555; border-left: 5px solid transparent; border-right: 5px solid transparent; }
.ic { width: 20px; height: 20px; margin: 0 5px 0 11px; }
.in1 { padding-left: 33px; }
.noic > span:last-child { margin-left: 10px; }
.ch { padding-left: 54px; }
.ch2 { padding-left: 78px; }
.ch2 .ic { margin-right: 6px; }
.ch .ic, .ch2 .ic { margin-left: 0; }
.hscroll { position: absolute; left: 0; right: 0; bottom: 0; height: 17px; background: #f4f4f4; border-top: 1px solid #c8c8c8; display: flex; align-items: center; }
.harrow { margin-left: 4px; width: 0; height: 0; border-right: 6px solid #444; border-top: 5px solid transparent; border-bottom: 5px solid transparent; }

.adv { margin-top: 8px; height: 28px; }
.adb { height: 34px; }
.cadmsg { height: 126px; flex: none; font-size: 20px; line-height: 24px; padding-top: 40px; }
.cad1, .cad2 { display: block; width: 167px; overflow: hidden; white-space: nowrap; }
.cad2 { padding-left: 75px; }
.lyr { height: 28px; }
.lyb { height: 34px; }
.layers { flex: 1; width: 298px; border: 1px solid #a8a8a8; border-width: 0 1px 1px 0; padding-top: 5px; }
.layers .ex { margin: 0; }
.layers b { font-weight: 700; font-size: 21.500px; letter-spacing: .5px; }
.sel { background: #0a78d6; color: #fff; height: 31px; margin-top: -5px; padding-top: 5px; }
.sel-t { background: #0078d7; text-decoration: underline; text-decoration-thickness: 2px; text-underline-offset: 2px; padding: 0 3px; margin-left: -3px; }
.cb { width: 16px; height: 16px; margin-left: 11px; border: 1px solid #999; background: #fff; color: #111; font: 700 14px/14px "DejaVu Sans", sans-serif; text-align: center; flex: none; }
.cbx { width: 16px; margin-left: 11px; flex: none; }
.sw { width: 18px; height: 18px; margin: 0 7px 0 8px; flex: none; }
.brown { background: #b07b45; }
.blk { background: #000; }
.chk { width: 18px; height: 18px; margin: 0 7px 0 8px; }

.rt-t { padding: 0 1px 0 4px; }
.q1 { margin-left: 10px; } .q2 { margin-left: 7px; } .q3 { margin-left: 9px; } .q4 { margin-left: 8px; } .q5 { margin-left: 7px; }
.psearch { height: 30px; flex: none; margin-top: 1px; background: #fff; border: 1px solid #bdbdbd; border-radius: 3px; display: flex; align-items: center; padding-left: 7px; font-size: 20px; }
.i16 { width: 16px; height: 16px; }
.psq { margin-left: 5px; }
.clrx { margin-left: auto; margin-right: 7px; }
.ptree { flex: 1; border: 1px solid #c4c4c4; border-width: 1px 0 1px 1px; padding-top: 1px; }
.hov { background: #f0f0f0; }

.statusbar { height: 38px; flex: none; display: flex; align-items: center; padding-top: 3px; background: #f0f0f0; font-size: 19.500px; white-space: nowrap; }
.sb-field { height: 31px; flex: none; background: #fff; border: 1px solid #bdbdbd; border-radius: 3px; display: flex; align-items: center; padding-left: 5px; overflow: hidden; }
.locator { margin-left: 5px; width: 231px; color: #777; padding-left: 8px; }
.locator span { margin-left: 4px; }
.sb-msg { margin-left: 9px; }
.sb-spacer { flex: 1; }
.sb-l { flex: none; text-align: left; }
.l-coord { width: 101px; }
.f-coord { width: 162px; }
.sb-icon { flex: none; display: flex; justify-content: center; }
.i22 { width: 22px; height: 22px; }
.s-ms { width: 30px; }
.l-scale { margin-left: 8px; width: 50px; }
.f-scale { width: 126px; }
.f-scale em { margin-left: auto; margin-right: 10px; width: 0; height: 0; border-left: 4px solid transparent; border-right: 4px solid transparent; border-top: 6px solid #666; }
.s-lck { width: 38px; }
.i-lck { width: 16px; height: 20px; }
.l-mag { width: 85px; }
.f-mag { width: 93px; }
.spin { margin-left: auto; width: 17px; height: 100%; display: flex; flex-direction: column; justify-content: center; gap: 4px; align-items: center; border-left: 1px solid #d8d8d8; }
.spin em { width: 0; height: 0; border-left: 4px solid transparent; border-right: 4px solid transparent; border-top: 5px solid #666; }
.spin em.up { border-top: 0; border-bottom: 5px solid #666; }
.l-rot { margin-left: 10px; width: 84px; }
.f-rot { width: 102px; }
.sb-check { width: 16px; height: 16px; margin-left: 7px; flex: none; background: #fff; border: 1px solid #999; font: 700 14px/14px "DejaVu Sans", sans-serif; text-align: center; }
.l-ren { margin-left: 6px; width: 64px; }
.s-wgs { width: 41px; padding-left: 7px; }
.i18 { width: 18px; height: 18px; }
.l-eps { width: 95px; }
.s-cmt { width: 53px; justify-content: flex-end; padding-right: 7px; }
.i20 { width: 20px; height: 20px; }

.taskbar { height: 50px; flex: none; display: flex; background: #d4d4d4; font-size: 15px; color: #222; }
.tk-start { width: 61px; display: flex; align-items: center; justify-content: center; flex: none; }
.tk-search { width: 429px; flex: none; margin-top: 1px; height: 48px; background: #fff; display: flex; align-items: center; padding-left: 14px; font-size: 18.600px; color: #333; }
.tk-search span { margin-left: 15px; }
.tk-slot { display: flex; align-items: center; justify-content: center; flex: none; }
.tk-slot.tv { width: 60px; }
.tk-slot.fl { width: 56px; }
.i-flm { width: 22px; height: 38px; }
.tk-slot.fl + .app { margin-left: 7px; }
.app { width: 106px; margin-right: 10px; flex: none; display: flex; align-items: center; padding-left: 8px; border-bottom: 3px solid #00b0b4; white-space: nowrap; }
.app span { margin-left: 7px; }
.app.act { width: 115px; margin: 0 6px 0 -3px; padding-left: 12px; background: #f0f0f0; }
.i24x { width: 24px; height: 24px; }
.tray { flex: none; width: 28px; display: flex; align-items: center; justify-content: center; }
.t3, .t4 { margin-left: 1px; }
.tk-lang, .tk-clock { flex: none; display: flex; flex-direction: column; justify-content: space-evenly; align-items: center; font-size: 14px; }
.tk-lang { width: 44px; margin-left: 4px; }
.tk-clock { width: 84px; margin-left: 5px; }

.ctxmenu {
  position: absolute; left: 167px; top: 296px; width: 284px;
  background: #fff; border: 1px solid #9a9a9a; box-shadow: 2px 2px 0 #a8a8a8;
  font-size: 14.800px; color: #222;
}
.mi { height: 28px; display: flex; align-items: center; padding-left: 6px; position: relative; white-space: nowrap; }
.mic { width: 20px; height: 20px; margin-right: 6px; flex: none; display: block; }
.mbox { width: 18px; height: 18px; margin: 0 7px 0 1px; border: 1px solid #bbb; background: #fff; flex: none; }
.dis { color: #8f8f8f; }
.msep { height: 1px; margin: 0 5px 1px; background: #c8c8c8; }
.sub::after { content: ""; position: absolute; right: 5px; top: 9px; width: 0; height: 0; border-left: 5px solid #666; border-top: 5px solid transparent; border-bottom: 5px solid transparent; }
.active { background: #0078d7; color: #e8f4ff; }

.redbox { position: absolute; border: 5px solid #ed1c24; background: transparent; }
.red1 { left: 0; top: 783px; width: 166px; height: 35px; border-width: 4px 5px 4px 3px; }
.red2 { left: 173px; top: 779px; width: 295px; height: 39px; }
```
